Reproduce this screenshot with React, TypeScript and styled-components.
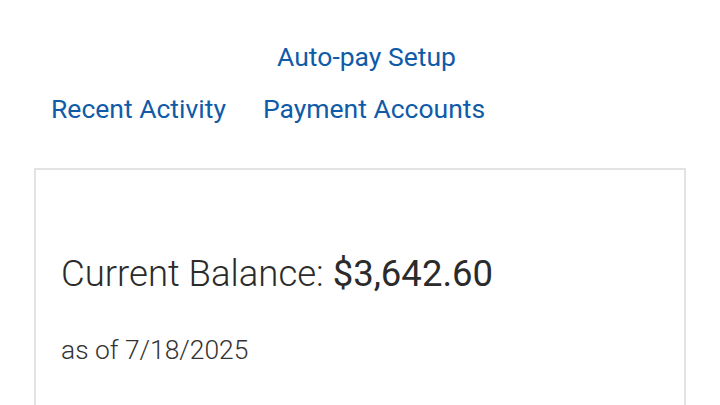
import React from 'react';
import styled, { createGlobalStyle } from 'styled-components';

const GlobalStyle = createGlobalStyle`
    html, body {
        margin: 0;
        padding: 0;
        background: #fff;
        font-family: Roboto, "Liberation Sans", sans-serif;
    }
`;

export default function App() {
    return (
        <Page>
            <GlobalStyle />
            <LinkRow $align="center">
                <NavLink href="#">Auto-pay Setup</NavLink>
            </LinkRow>
            <LinkRow $align="flex-start">
                <NavLink href="#">Recent Activity</NavLink>
                <NavLink href="#">Payment Accounts</NavLink>
            </LinkRow>

            <Card>
                <Balance>
                    Current Balance: <Amount>$3,642.60</Amount>
                </Balance>
                <AsOf>as of 7/18/2025</AsOf>
            </Card>
        </Page>
    );
}

const Page = styled.main`
    width: 720px;
    height: 405px;
    overflow: hidden;
    box-sizing: border-box;
    padding: 31px 34px 0;
`;

const LinkRow = styled.nav<{ $align: string }>`
    display: flex;
    justify-content: ${(p) => p.$align};
    gap: 37px;
    padding: ${(p) => (p.$align === 'center' ? '0 0 0 13px' : '0 0 0 17px')};
    height: 52px;
    align-items: center;
`;

const NavLink = styled.a`
    font-size: 26.5px;
    color: #0f5ba8;
    text-decoration: none;
    line-height: 1;
`;

const Card = styled.section`
    margin-top: 33px;
    height: 260px;
    border: 2px solid #e3e3e3;
    border-bottom: none;
    padding: 82px 25px 0;
`;

const Balance = styled.h2`
    margin: 0;
    font-size: 36.5px;
    font-weight: 300;
    color: #2b2b2b;
    line-height: 1.2;
`;

const Amount = styled.span`
    font-weight: 400;
`;

const AsOf = styled.p`
    margin: 39px 0 0;
    font-size: 26.4px;
    font-weight: 300;
    color: #333;
    line-height: 1.2;
`;
